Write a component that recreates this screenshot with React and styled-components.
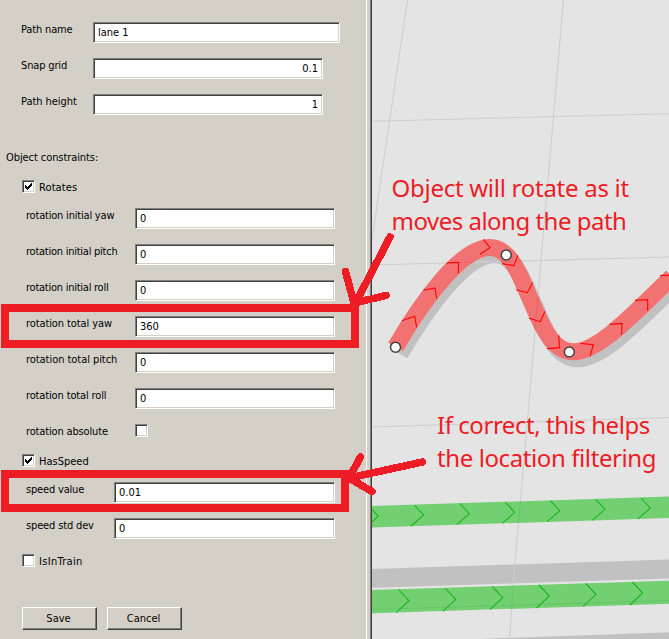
import React from "react";
import styled, { createGlobalStyle } from "styled-components";

const GlobalStyle = createGlobalStyle`
  body { margin: 0; overflow: hidden; }
  *, *::before, *::after { box-sizing: border-box; }
`;

const RED = "#ee1c24";

const Page = styled.main`
  position: relative;
  display: flex;
  width: 669px;
  height: 639px;
  overflow: hidden;
  background: #d4d0c8;
  font-family: "DejaVu Sans Condensed", "DejaVu Sans", sans-serif;
  font-stretch: condensed;
  font-size: 11px;
  color: #000;
`;

const Panel = styled.form`
  width: 366px;
  flex: none;
  padding-top: 22px;
`;

const Splitter = styled.div`
  width: 6px;
  flex: none;
  border-left: 1px solid #fff;
  border-right: 1px solid #404040;
  box-shadow: inset -1px 0 #808080;
`;

const Row = styled.div`
  display: flex;
  align-items: flex-start;
  height: ${(p) => p.$height || 36}px;
  padding-left: ${(p) => p.$indent}px;
`;

const Label = styled.label`
  flex: none;
  width: ${(p) => p.$width}px;
  padding-top: 1px;
  line-height: 14px;
  white-space: nowrap;
  letter-spacing: ${(p) => p.$spacing || 0}px;
`;

const Field = styled.input`
  width: ${(p) => p.$width}px;
  height: 21px;
  padding: 0 4px 1px;
  border: 1px solid;
  border-color: #808080 #fff #fff #808080;
  border-radius: 0;
  outline: none;
  background: #fff;
  box-shadow: inset 1px 1px #404040, inset -1px -1px #d4d0c8;
  font: inherit;
  color: #000;
  text-align: ${(p) => (p.$right ? "right" : "left")};
`;

const Heading = styled.div`
  height: 30px;
  padding: 1px 0 0 6px;
  line-height: 14px;
  letter-spacing: -0.08px;
`;

const Box = styled.span`
  display: block;
  flex: none;
  width: 13px;
  height: 13px;
  margin-right: 4px;
  border: 1px solid;
  border-color: #808080 #fff #fff #808080;
  background: #fff;
  box-shadow: inset 1px 1px #404040, inset -1px -1px #d4d0c8;
`;

const Tick = styled.svg`
  display: block;
  width: 11px;
  height: 11px;
`;

const Buttons = styled.div`
  display: flex;
  gap: 10px;
  padding-left: 22px;
`;

const Button = styled.button`
  width: 75px;
  height: 23px;
  padding: 0 2px 1px 0;
  border: 1px solid;
  border-color: #fff #404040 #404040 #fff;
  border-radius: 0;
  background: #d4d0c8;
  box-shadow: inset -1px -1px #808080;
  font: inherit;
  color: #000;
`;

const Scene = styled.svg`
  display: block;
  flex: none;
  width: 297px;
  height: 639px;
  background: #e4e4e4;
`;

const Highlight = styled.div`
  position: absolute;
  left: 1px;
  top: ${(p) => p.$top}px;
  width: ${(p) => p.$width}px;
  height: ${(p) => p.$height}px;
  border: 8px solid ${RED};
`;

const Arrows = styled.svg`
  position: absolute;
  inset: 0;
  pointer-events: none;
`;

const Note = styled.div`
  position: absolute;
  left: ${(p) => p.$left}px;
  top: ${(p) => p.$top}px;
  color: ${RED};
  font-family: "Noto Sans", sans-serif;
  font-size: 24px;
  line-height: 33px;
  white-space: nowrap;
`;

const NoteLine = styled.div`
  letter-spacing: ${(p) => p.$spacing}px;
`;

function CheckBox({ checked }) {
  return (
    <Box role="checkbox" aria-checked={!!checked}>
      {checked && (
        <Tick viewBox="0 0 11 11" shapeRendering="crispEdges">
          <path d="M2 4h1v1h1v1h1v-1h1v-1h1v-1h1v-1h1v3h-1v1h-1v1h-1v1h-1v1h-1v-1h-1v-1h-1z" />
        </Tick>
      )}
    </Box>
  );
}

function FieldRow({ label, value, indent, labelWidth, width, right, height, spacing }) {
  return (
    <Row $indent={indent} $height={height}>
      <Label $width={labelWidth} $spacing={spacing}>{label}</Label>
      <Field $width={width} $right={right} defaultValue={value} />
    </Row>
  );
}

const rotations = [
  ["rotation initial yaw", "0", -0.2],
  ["rotation initial pitch", "0", -0.25],
  ["rotation initial roll", "0", -0.25],
  ["rotation total yaw", "360", -0.1],
  ["rotation total pitch", "0", -0.05],
  ["rotation total roll", "0", -0.14],
];

const upperLane = [[378.3, 516.3], [423.7, 515], [469.3, 513.7], [514.7, 512.3], [559.7, 510.7], [605, 509.3], [650.3, 508]];
const lowerLane = [[409, 600.7], [455.7, 599.3], [502.7, 597.7], [549.3, 596], [596, 594.3], [642.7, 593]];

const curve =
  "M395.5 347C420 305 460 247.5 490 247.5C507 247.5 517 268 525 287L537.5 315.5C549 341 559 351.7 574 351.7C600 351.7 640 307 672 277";

const curveChevrons =
  "M66 482L104 469L110 502M130 391L165 384L170 416M200 309L236 307L235 340M310 238L330 263L300 283M366 311L402 317L413 286M408 389L442 398L458 368M447 475L481 485L495 454M501 566L539 563L536 526M602 550L640 554L630 589M689 493L726 490L725 524M765 421L803 419L803 452M840 347L878 345L878 378";

function PathScene() {
  return (
    <Scene viewBox="372 0 297 639">
      <g fill="#c1c1c1">
        <path d="M372 569L669 559.5V578.5L372 587.7Z" />
        <path d="M477 639L669 632.3V639Z" />
      </g>
      <path d={curve} transform="translate(4.5 7)" fill="none" stroke="#c1c1c1" strokeWidth="17" />
      <path d={curve} fill="none" stroke="#e4e4e4" strokeWidth="17" />
      <g fill="none" stroke="#cecece" strokeWidth="1.1">
        <path d="M407.5 0L390 118L377.7 200L372 240" />
        <path d="M563.5 0L553.5 116L541 260L527 426L515 562L509.5 639" />
        <path d="M372 121.3L669 113.7M372 265L669 257M372 427L669 417.5M372 609.5L669 600.5" />
      </g>
      <g fill="#00b900" fillOpacity=".5">
        <path d="M372 506L669 496.5V518L372 527.5Z" />
        <path d="M372 590L669 580.7V603.7L372 613.3Z" />
      </g>
      <g fill="none" stroke="#16b916" strokeWidth="1.1">
        {upperLane.map(([x, y]) => (
          <path key={x} d={`M${x - 9.3} ${y - 10}L${x} ${y}L${x - 12.5} ${y + 11}`} />
        ))}
        {lowerLane.map(([x, y]) => (
          <path key={x} d={`M${x - 10.3} ${y - 11}L${x} ${y}L${x - 12.8} ${y + 12}`} />
        ))}
      </g>
      <path d={curve} fill="none" stroke="#ff0000" strokeOpacity=".5" strokeWidth="17" />
      <path d={curveChevrons} transform="translate(380 160) scale(.33333)" fill="none" stroke="#ff0000" strokeWidth="3.3" />
      <g fill="#fff" stroke="#404040" strokeWidth="1.5">
        <circle cx="395.5" cy="347.2" r="5" />
        <circle cx="506.2" cy="255" r="5" />
        <circle cx="569.3" cy="352" r="5" />
      </g>
    </Scene>
  );
}

export default function App() {
  return (
    <Page>
      <GlobalStyle />
      <Panel>
        <FieldRow label="Path name" value="lane 1" indent={21} labelWidth={72} width={247} spacing={-0.15} />
        <FieldRow label="Snap grid" value="0.1" indent={21} labelWidth={72} width={230} spacing={-0.15} right />
        <FieldRow label="Path height" value="1" indent={21} labelWidth={72} width={230} spacing={-0.05} right height={56} />
        <Heading>Object constraints:</Heading>
        <Row $indent={22} $height={28}>
          <CheckBox checked />
          <Label $spacing={0.1}>Rotates</Label>
        </Row>
        {rotations.map(([label, value, spacing]) => (
          <FieldRow key={label} label={label} value={value} indent={26} labelWidth={109} width={200} spacing={spacing} />
        ))}
        <Row $indent={26} $height={30}>
          <Label $width={109} $spacing={-0.15}>rotation absolute</Label>
          <CheckBox />
        </Row>
        <Row $indent={22} $height={28}>
          <CheckBox checked />
          <Label>HasSpeed</Label>
        </Row>
        <FieldRow label="speed value" value="0.01" indent={26} labelWidth={88} width={221} spacing={-0.18} />
        <FieldRow label="speed std dev" value="0" indent={26} labelWidth={88} width={221} spacing={-0.15} />
        <Row $indent={22} $height={53}>
          <CheckBox />
          <Label $spacing={0.3}>IsInTrain</Label>
        </Row>
        <Buttons>
          <Button type="button">Save</Button>
          <Button type="button">Cancel</Button>
        </Buttons>
      </Panel>
      <Splitter />
      <PathScene />

      <Highlight $top={304} $width={358} $height={44} />
      <Highlight $top={470} $width={348} $height={42} />
      <Arrows width="669" height="639" shapeRendering="crispEdges" fill="none" stroke={RED} strokeWidth="7.5" strokeLinecap="round" strokeLinejoin="round">
        <path d="M390 237L355 304M345.5 271.5L354 303L386 295.5" />
        <path d="M422.5 462L349 478M360.5 457L349 478L372 491.5" />
      </Arrows>
      <Note $left={391.5} $top={171}>
        <NoteLine $spacing={-0.27}>Object will rotate as it</NoteLine>
        <NoteLine $spacing={-0.5}>moves along the path</NoteLine>
      </Note>
      <Note $left={437} $top={408}>
        <NoteLine $spacing={-0.45}>If correct, this helps</NoteLine>
        <NoteLine $spacing={-0.4}>the location filtering</NoteLine>
      </Note>
    </Page>
  );
}
